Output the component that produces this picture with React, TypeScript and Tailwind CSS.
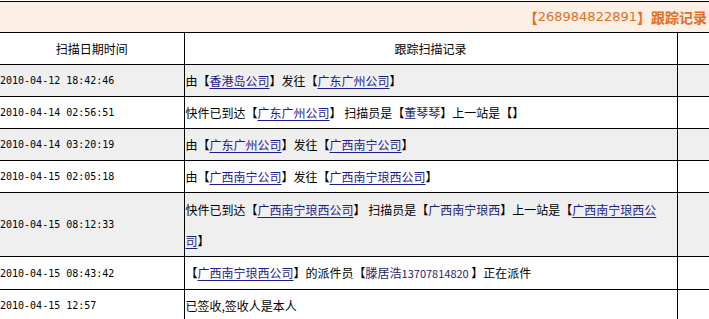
const cjk = '"Noto Sans CJK SC", "DejaVu Sans", sans-serif';

function L({ children }: { children: React.ReactNode }) {
  return <a className="text-[#1c1c8a] underline underline-offset-2 decoration-1">{children}</a>;
}

// scanner / courier names: blue, no underline
function N({ children }: { children: React.ReactNode }) {
  return <span className="text-[#1c1c6a]">{children}</span>;
}

interface Row {
  time: string;
  gray?: boolean;
  tall?: boolean;
  content: React.ReactNode;
}

const rows: Row[] = [
  {
    time: "2010-04-12 18:42:46",
    gray: true,
    content: (
      <>
        由【<L>香港岛公司</L>】发往【<L>广东广州公司</L>】
      </>
    ),
  },
  {
    time: "2010-04-14 02:56:51",
    content: (
      <>
        快件已到达【<L>广东广州公司</L>】 扫描员是【<N>董琴琴</N>】上一站是【】
      </>
    ),
  },
  {
    time: "2010-04-14 03:20:19",
    gray: true,
    content: (
      <>
        由【<L>广东广州公司</L>】发往【<L>广西南宁公司</L>】
      </>
    ),
  },
  {
    time: "2010-04-15 02:05:18",
    content: (
      <>
        由【<L>广西南宁公司</L>】发往【<L>广西南宁琅西公司</L>】
      </>
    ),
  },
  {
    time: "2010-04-15 08:12:33",
    gray: true,
    tall: true,
    content: (
      <>
        快件已到达【<L>广西南宁琅西公司</L>】 扫描员是【<N>广西南宁琅西</N>】上一站是【<L>广西南宁琅西公</L>
        <br />
        <L>司</L>】
      </>
    ),
  },
  {
    time: "2010-04-15 08:43:42",
    content: (
      <>
        【<L>广西南宁琅西公司</L>】的派件员【<N>滕居浩</N>
        <span className="text-[11px] text-[#1c1c6a]">13707814820 </span>】正在派件
      </>
    ),
  },
  {
    time: "2010-04-15 12:57",
    content: <>已签收,签收人是本人</>,
  },
];

export default function App() {
  return (
    <div className="w-[709px] h-[319px] overflow-hidden bg-white text-black" style={{ fontFamily: cjk }}>
      {/* title band */}
      <div className="mt-px border-t border-black h-[31px] bg-[#fcefe6] flex items-center justify-end pr-[2px]">
        <span className="text-[#e36e20] text-[14px] font-bold">【</span>
        <span className="text-[#e36e20] text-[13px]" style={{ fontFamily: '"DejaVu Sans", sans-serif' }}>
          268984822891
        </span>
        <span className="text-[#e36e20] text-[14px] font-bold">】跟踪记录</span>
      </div>

      <table className="border-collapse table-fixed w-[709px] text-[12px]">
        <colgroup>
          <col className="w-[184px]" />
          <col className="w-[493px]" />
          <col className="w-[32px]" />
        </colgroup>
        <thead>
          <tr className="h-[32px] bg-white">
            <th className="border-t border-b border-r border-black font-normal text-center">扫描日期时间</th>
            <th className="border-t border-b border-r border-black font-normal text-center">跟踪扫描记录</th>
            <th className="border-t border-b border-black" />
          </tr>
        </thead>
        <tbody>
          {rows.map((r, i) => (
            <tr key={i} className={r.gray ? "bg-[#efefef]" : "bg-white"}>
              <td
                className={`border-b border-r border-black align-middle pl-0 text-[10px] ${r.tall ? "h-[64px]" : "h-[32px]"}`}
                style={{ fontFamily: '"DejaVu Sans Mono", monospace' }}
              >
                {r.time}
              </td>
              <td className="border-b border-r border-black align-middle pl-px leading-[31px]">{r.content}</td>
              <td className="border-b border-black" />
            </tr>
          ))}
        </tbody>
      </table>
    </div>
  );
}
